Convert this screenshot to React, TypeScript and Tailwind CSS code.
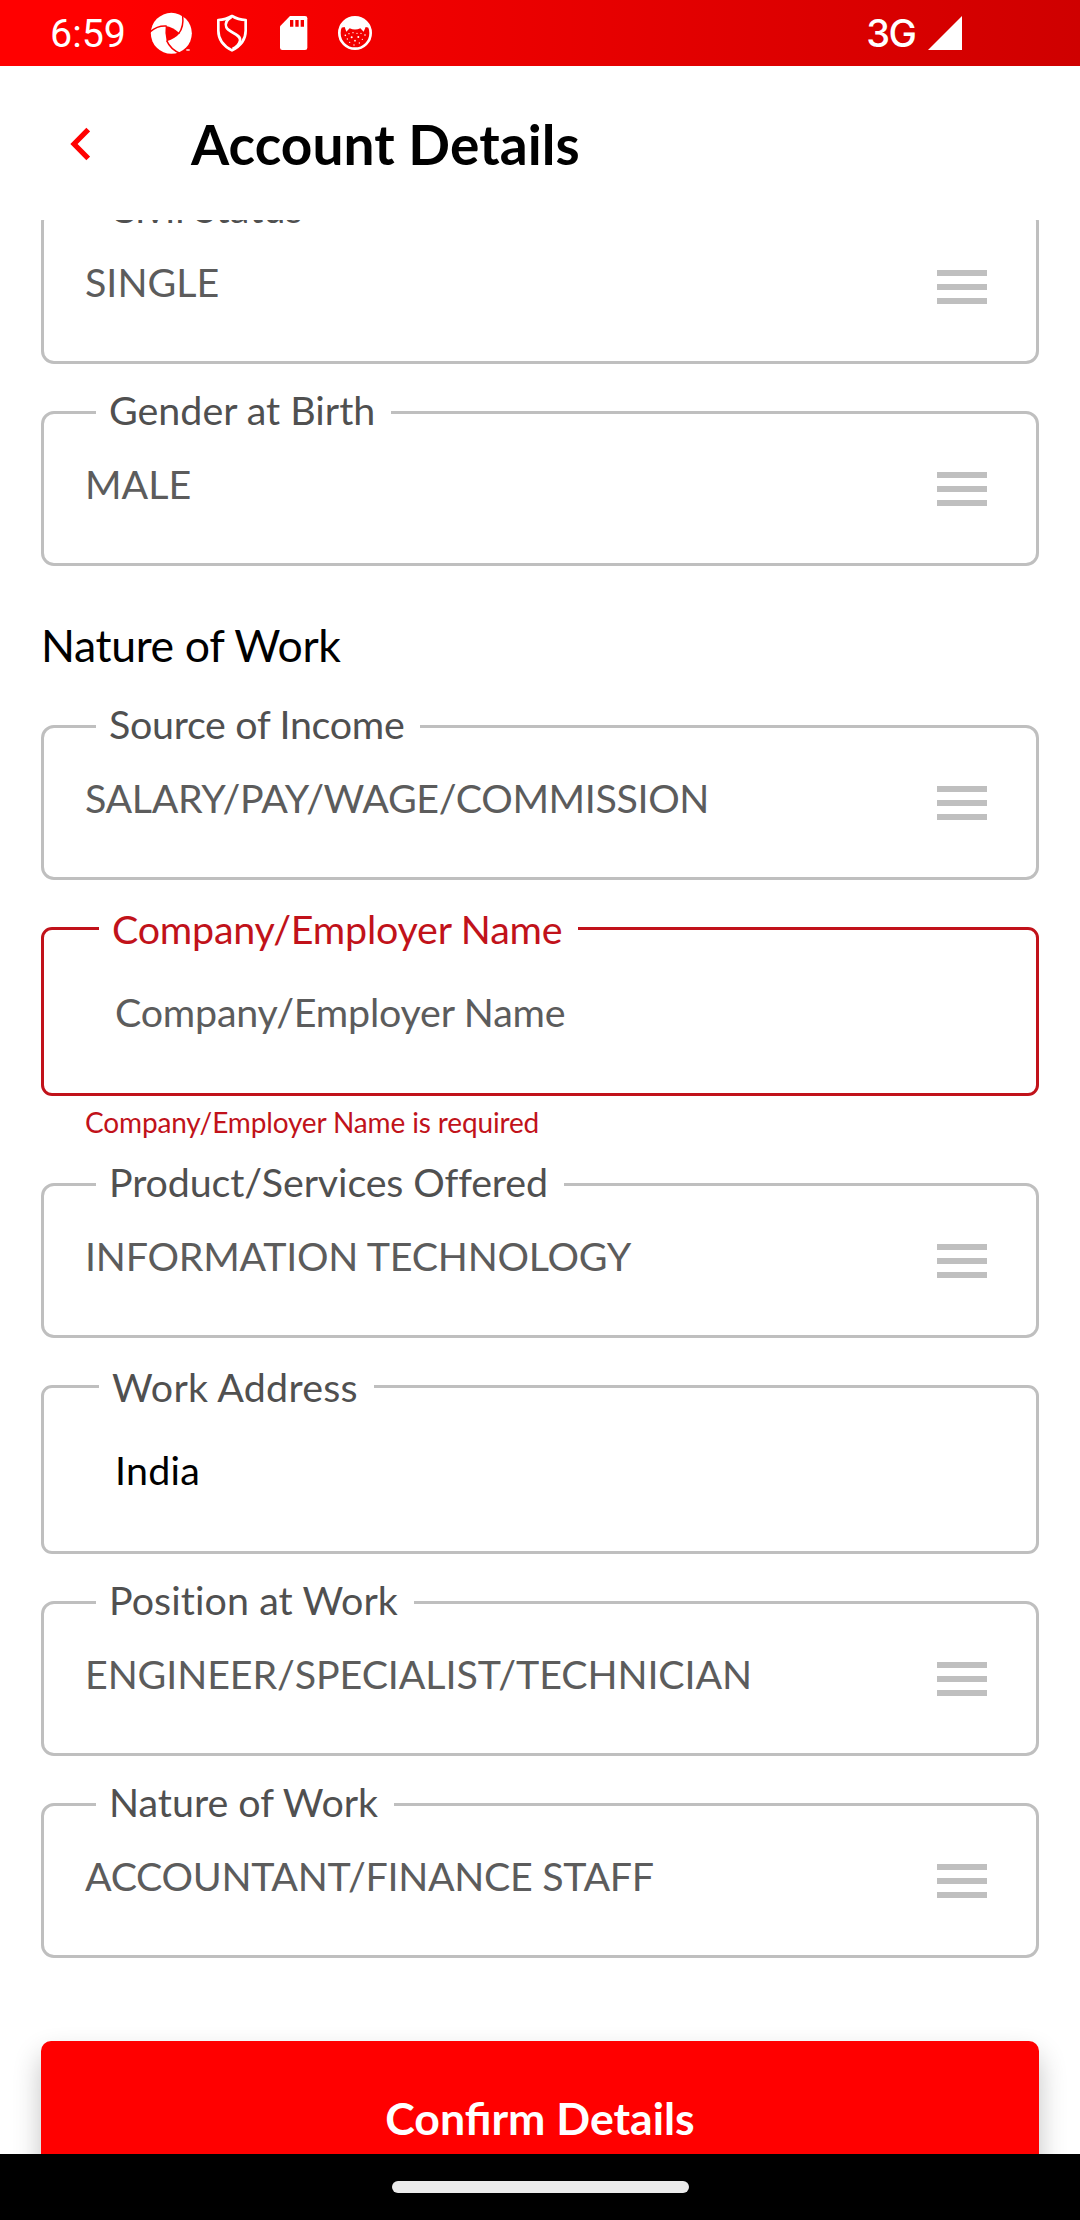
import React from "react";

function StatusBar() {
  return (
    <div className="flex h-[66px] shrink-0 items-center bg-linear-to-r from-[#ff0000] from-10% to-[#cf0000] pr-[118px] pl-[50px] text-white">
      <span className="w-[74px] pt-[2px] font-[Roboto] text-[39.4px] leading-[66px] whitespace-nowrap">6:59</span>
      <svg className="ml-[26px] h-[44px] w-[44px] shrink-0" viewBox="0 0 132 132">
        <circle cx="64" cy="67" r="61.5" fill="#fff" />
        <path d="M47 45 Q68 47 89 67 Q77 82 50 91 Q44 67 47 45Z" fill="#f90000" />
        <g fill="none" stroke="#f90000" strokeWidth="4.5">
          <path d="M2 61 Q22 43 50 45" />
          <path d="M86 68 Q102 47 98 15" />
          <path d="M50 89 Q62 117 94 129" />
        </g>
        <path d="M109 115h10v4h-10z" fill="#fff" />
      </svg>
      <svg className="ml-[22px] h-[38px] w-[32px] shrink-0" viewBox="0 0 96 114" fill="none" stroke="#fff" strokeWidth="8" strokeLinejoin="round">
        <path d="M48 6 Q30 17 7 18 V50 Q7 88 48 109 Q89 88 89 50 V18 Q66 17 48 6Z" />
        <path d="M46 9 Q24 22 31 40 C37 56 76 60 72 80 Q69 94 50 105" />
      </svg>
      <svg className="ml-[32px] h-[34px] w-[28px] shrink-0" viewBox="0 0 84 102">
        <path d="M30 0 H75 Q82 0 82 7 V95 Q82 102 75 102 H7 Q0 102 0 95 V31Z" fill="#fff" />
        <path d="M30 12h10v20H30zM46 12h10v20H46zM62 12h10v20H62z" fill="#f40000" />
      </svg>
      <svg className="ml-[29px] h-[36px] w-[36px] shrink-0" viewBox="0 0 108 108">
        <circle cx="54" cy="54" r="47" fill="none" stroke="#fff" strokeWidth="8" />
        <path d="M12 38 Q26 6 54 6 Q82 6 96 38 L86 36 L80 50 L70 40 Q54 47 38 40 L28 50 L23 36Z" fill="#fff" />
        <g fill="#fff">
          <circle cx="25" cy="61" r="2.5" /><circle cx="36" cy="56" r="2" /><circle cx="48" cy="53" r="2" />
          <circle cx="60" cy="55" r="2" /><circle cx="72" cy="55" r="2" /><circle cx="84" cy="60" r="2.5" />
          <circle cx="31" cy="72" r="2" /><circle cx="44" cy="67" r="3" /><circle cx="64" cy="66" r="3" />
          <circle cx="76" cy="73" r="2" /><circle cx="38" cy="82" r="2" /><circle cx="54" cy="77" r="2.5" />
          <circle cx="67" cy="84" r="2" /><circle cx="51" cy="90" r="2" />
        </g>
      </svg>
      <span className="ml-auto font-[Inter] text-[38px] leading-[64px] font-medium tracking-[-1.8px]">3G</span>
      <svg className="ml-[13px] h-[34px] w-[34px] shrink-0" viewBox="0 0 34 34">
        <path d="M34 0 V34 H0Z" fill="#fff" />
      </svg>
    </div>
  );
}

function MenuIcon() {
  return (
    <span className="flex flex-col gap-2">
      <span className="h-[6px] w-[50px] bg-[#bfbfbf]" />
      <span className="h-[6px] w-[50px] bg-[#bfbfbf]" />
      <span className="h-[6px] w-[50px] bg-[#bfbfbf]" />
    </span>
  );
}

type FieldProps = { label: string; value: string; labelClass?: string; valueClass?: string };

function SelectField({ label, value, labelClass = "", valueClass = "" }: FieldProps) {
  return (
    <div className="relative flex h-[155px] shrink-0 items-start justify-between rounded-[13px] border-3 border-[#bfbfbf] pr-[49px] pl-[41px]">
      <span
        className={`absolute -top-[24px] left-[52px] bg-white pr-[16px] pl-[13px] text-[39.4px] leading-[40px] whitespace-nowrap text-[#505050] ${labelClass}`}
      >
        {label}
      </span>
      <span className={`mt-[50px] text-[39.4px] leading-[40px] whitespace-nowrap text-[#5c5c5c] ${valueClass}`}>
        {value}
      </span>
      <span className="mt-[58px]">
        <MenuIcon />
      </span>
    </div>
  );
}

function TextField({ label, value, labelClass = "", valueClass = "", error }: FieldProps & { error?: boolean }) {
  return (
    <div
      className={`relative h-[169px] shrink-0 rounded-[11px] border-3 pl-[71px] ${
        error ? "border-[#c1121a]" : "border-[#bfbfbf]"
      }`}
    >
      <span
        className={`absolute -top-[21px] left-[55px] bg-white pr-[16px] pl-[13px] text-[39.4px] leading-[40px] whitespace-nowrap ${
          error ? "text-[#c1121a]" : "text-[#505050]"
        } ${labelClass}`}
      >
        {label}
      </span>
      <span
        className={`mt-[62px] block text-[39.4px] leading-[40px] ${error ? "text-[#5c5c5c]" : "text-black"} ${valueClass}`}
      >
        {value}
      </span>
    </div>
  );
}

export default function App() {
  return (
    <div className="flex h-[2220px] w-[1080px] flex-col overflow-hidden bg-white font-[Lato,sans-serif]">
      <StatusBar />
      <header className="z-10 flex h-[154px] shrink-0 items-center bg-white pt-[2px] pl-[70px]">
        <svg className="h-[34px] w-[20px]" viewBox="0 0 20 34" fill="none" stroke="#ff0000" strokeWidth="5.2">
          <path d="M18.2 2.5 L4 17 L18.2 31.5" />
        </svg>
        <h1 className="ml-[101px] text-[55px] leading-[66px] font-bold tracking-[0.1px] text-black">Account Details</h1>
      </header>
      <main className="flex h-[1934px] shrink-0 flex-col overflow-hidden px-[41px]">
        <div className="-mt-[11px] flex shrink-0 flex-col gap-[47px]">
          <SelectField label="Civil Status" value="SINGLE" labelClass="tracking-[0.15px]" />
          <SelectField label="Gender at Birth" value="MALE" />
        </div>
        <h2 className="mt-[52px] h-[107px] shrink-0 text-[44.6px] leading-[54px] tracking-[-0.36px] text-black">
          Nature of Work
        </h2>
        <div className="flex shrink-0 flex-col gap-[47px]">
          <SelectField
            label="Source of Income"
            value="SALARY/PAY/WAGE/COMMISSION"
            labelClass="tracking-[-0.3px]"
            valueClass="tracking-[-0.36px]"
          />
          <TextField
            label="Company/Employer Name"
            value="Company/Employer Name"
            labelClass="tracking-[-0.2px]"
            valueClass="tracking-[-0.2px]"
            error
          />
        </div>
        <p className="h-[87px] shrink-0 pt-[9px] pl-[44px] text-[28px] leading-[34px] tracking-[-0.14px] text-[#c1121a]">
          Company/Employer Name is required
        </p>
        <div className="flex shrink-0 flex-col gap-[47px]">
          <SelectField
            label="Product/Services Offered"
            value="INFORMATION TECHNOLOGY"
            labelClass="tracking-[-0.13px]"
            valueClass="tracking-[-0.23px]"
          />
          <TextField
            label="Work Address"
            value="India"
            labelClass="tracking-[0.26px]"
            valueClass="tracking-[0.26px]"
          />
          <SelectField
            label="Position at Work"
            value="ENGINEER/SPECIALIST/TECHNICIAN"
            labelClass="tracking-[0.08px]"
            valueClass="tracking-[-0.1px]"
          />
          <SelectField label="Nature of Work" value="ACCOUNTANT/FINANCE STAFF" valueClass="tracking-[-0.31px]" />
        </div>
        <button className="mt-[83px] h-[155px] shrink-0 rounded-[10px] bg-[#ff0000] pb-[2px] text-[44.6px] leading-[54px] font-bold text-white shadow-[0_14px_28px_rgba(0,0,0,0.24)]">
          Confirm Details
        </button>
      </main>
      <div className="flex h-[66px] shrink-0 justify-center bg-black pt-[27px]">
        <span className="h-[12px] w-[297px] rounded-full bg-[#ebebeb]" />
      </div>
    </div>
  );
}
